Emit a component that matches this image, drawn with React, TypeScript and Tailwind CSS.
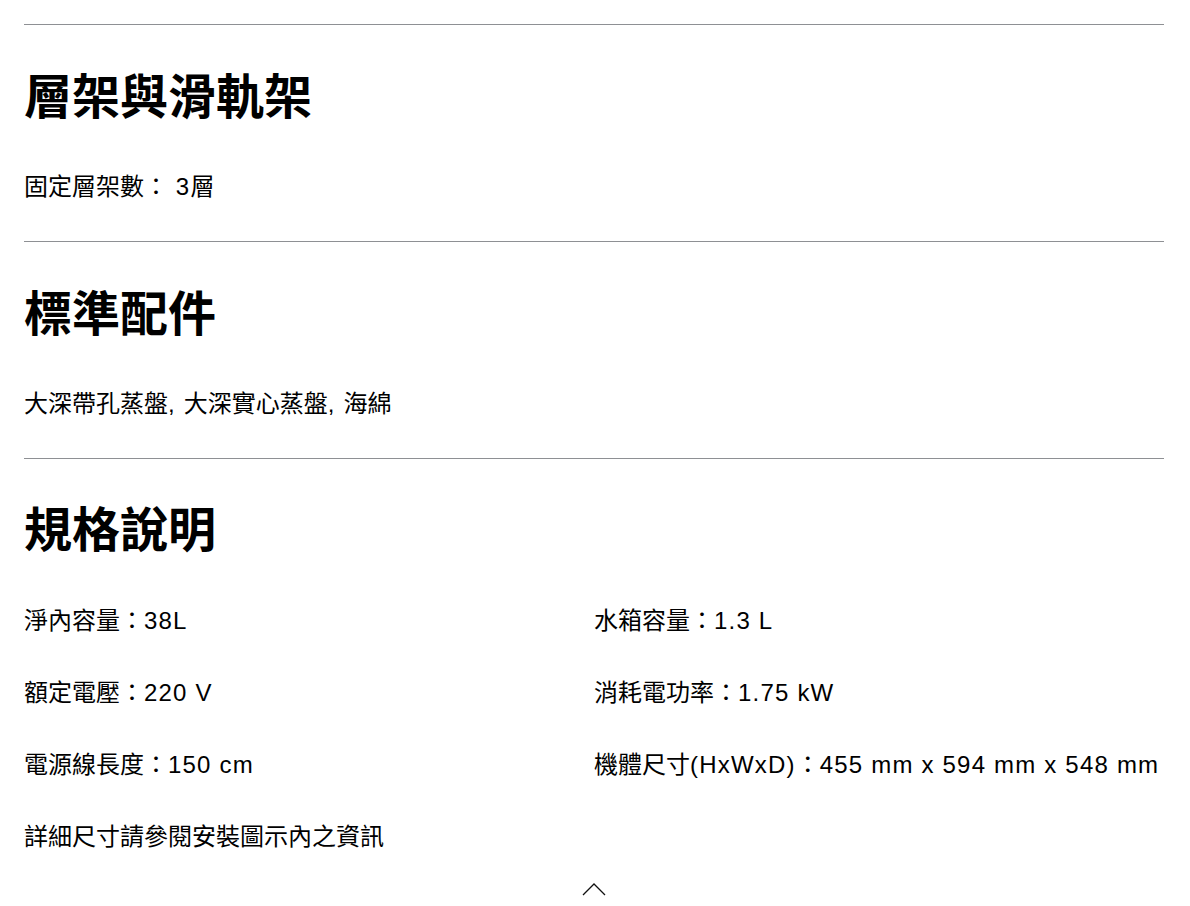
import { FC, ReactNode } from "react";

const font = {
  fontFamily: '"Liberation Sans", "Noto Sans CJK TC", sans-serif',
};

// Latin runs sit a little looser than the CJK ones in the original
const Txt: FC<{ text: string }> = ({ text }) => {
  const parts = text.split(/([\u0020-\u007e]+)/).filter(Boolean);
  return (
    <>
      {parts.map((p, i) =>
        /^[\u0020-\u007e]+$/.test(p) ? (
          <span key={i} className="tracking-[1.2px]">
            {p}
          </span>
        ) : (
          <span key={i}>{p}</span>
        )
      )}
    </>
  );
};

interface SectionProps {
  title: string;
  children: ReactNode;
}

const Section: FC<SectionProps> = ({ title, children }) => {
  return (
    <section className="border-t border-[#8e9094] pt-[45px] pb-[38px]">
      <h2 className="text-[48px] leading-[56px] font-bold text-black">{title}</h2>
      <div className="mt-[45px]">{children}</div>
    </section>
  );
};

const specs = [
  "淨內容量：38L",
  "水箱容量：1.3 L",
  "額定電壓：220 V",
  "消耗電功率：1.75 kW",
  "電源線長度：150 cm",
  "機體尺寸(HxWxD)：455 mm x 594 mm x 548 mm",
  "詳細尺寸請參閱安裝圖示內之資訊",
];

export default function App() {
  return (
    <div className="bg-white min-h-screen text-black" style={font}>
      <div className="ml-6 mr-[26px] pt-6">
        <Section title="層架與滑軌架">
          <p className="text-[24px] leading-8">
            <Txt text="固定層架數： 3層" />
          </p>
        </Section>
        <Section title="標準配件">
          <p className="text-[24px] leading-8">
            <Txt text="大深帶孔蒸盤, 大深實心蒸盤, 海綿" />
          </p>
        </Section>
        <section className="border-t border-[#8e9094] pt-[44px]">
          <h2 className="text-[48px] leading-[56px] font-bold">規格說明</h2>
          <div className="mt-[46px] grid grid-cols-2 gap-y-[40px]">
            {specs.map((s) => (
              <p key={s} className="text-[24px] leading-8 whitespace-nowrap">
                <Txt text={s} />
              </p>
            ))}
          </div>
          <div className="flex justify-center pt-[30px]">
            <button className="block" aria-label="收合">
              <svg width="24" height="13" viewBox="0 0 24 13" fill="none">
                <path d="M1 12 L12 1 L23 12" stroke="#111" strokeWidth="1.3" />
              </svg>
            </button>
          </div>
        </section>
      </div>
    </div>
  );
}
